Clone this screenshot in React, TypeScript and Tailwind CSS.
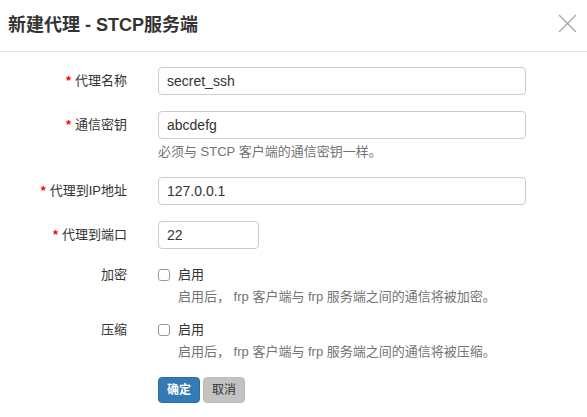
import React from "react";

const font = { fontFamily: '"Liberation Sans", "Noto Sans CJK SC", sans-serif' };

function Label({ text, required }: { text: string; required?: boolean }) {
  return (
    <div className="w-[127px] shrink-0 text-right text-[13px] leading-5 text-[#333]">
      {required && <span className="mr-[4px] font-bold text-[#f00]">*</span>}
      {text}
    </div>
  );
}

function TextInput({ value, width }: { value: string; width: string }) {
  return (
    <div
      className={`${width} h-[28px] rounded-[4px] border border-[#ccc] bg-white pl-[8px] text-[14px] leading-[26px] text-[#333]`}
    >
      {value}
    </div>
  );
}

function Checkbox() {
  return <span className="inline-block h-[12px] w-[12px] rounded-[3px] border border-[#999] bg-white" />;
}

export default function App() {
  return (
    <div className="h-[417px] w-[587px] overflow-hidden bg-white" style={font}>
      {/* Header */}
      <div className="flex h-[52px] items-center justify-between border-b border-[#e5e5e5] pl-[8px] pr-[10px]">
        <h4 className="text-[18px] font-semibold text-[#333]">新建代理 - STCP服务端</h4>
        <svg width="19" height="19" viewBox="0 0 19 19" className="mb-[4px]">
          <path d="M1 1L18 18M18 1L1 18" stroke="#a8a8a8" strokeWidth="1.4" fill="none" />
        </svg>
      </div>

      {/* Form */}
      <div className="pt-[15px]">
        <div className="mb-[16px] flex items-center">
          <Label text="代理名称" required />
          <div className="ml-[31px]">
            <TextInput value="secret_ssh" width="w-[368px]" />
          </div>
        </div>

        <div className="mb-[16px] flex">
          <div className="flex h-[28px] items-center">
            <Label text="通信密钥" required />
          </div>
          <div className="ml-[31px]">
            <TextInput value="abcdefg" width="w-[368px]" />
            <div className="mt-[4px] text-[13px] leading-[18px] text-[#737373]">
              必须与 STCP 客户端的通信密钥一样。
            </div>
          </div>
        </div>

        <div className="mb-[16px] flex items-center">
          <Label text="代理到IP地址" required />
          <div className="ml-[31px]">
            <TextInput value="127.0.0.1" width="w-[368px]" />
          </div>
        </div>

        <div className="mb-[16px] flex items-center">
          <Label text="代理到端口" required />
          <div className="ml-[31px]">
            <TextInput value="22" width="w-[101px]" />
          </div>
        </div>

        <div className="mb-[14px] flex">
          <Label text="加密" />
          <div className="ml-[31px]">
            <div className="flex h-5 items-center gap-[8px] text-[13px] text-[#333]">
              <Checkbox />
              <span>启用</span>
            </div>
            <div className="mt-[3px] pl-[20px] text-[13px] leading-[18px] text-[#737373]">
              启用后， frp 客户端与 frp 服务端之间的通信将被加密。
            </div>
          </div>
        </div>

        <div className="mb-[16px] flex">
          <Label text="压缩" />
          <div className="ml-[31px]">
            <div className="flex h-5 items-center gap-[8px] text-[13px] text-[#333]">
              <Checkbox />
              <span>启用</span>
            </div>
            <div className="mt-[3px] pl-[20px] text-[13px] leading-[18px] text-[#737373]">
              启用后， frp 客户端与 frp 服务端之间的通信将被压缩。
            </div>
          </div>
        </div>

        <div className="ml-[158px] flex gap-[3px]">
          <button className="h-[26px] w-[42px] rounded-[4px] border border-[#2e6da4] bg-[#337ab7] text-[12px] font-bold text-white">
            确定
          </button>
          <button className="h-[26px] w-[42px] rounded-[4px] border border-[#bdbdbd] bg-[#c2c2c2] text-[12px] text-[#333]">
            取消
          </button>
        </div>
      </div>
    </div>
  );
}
